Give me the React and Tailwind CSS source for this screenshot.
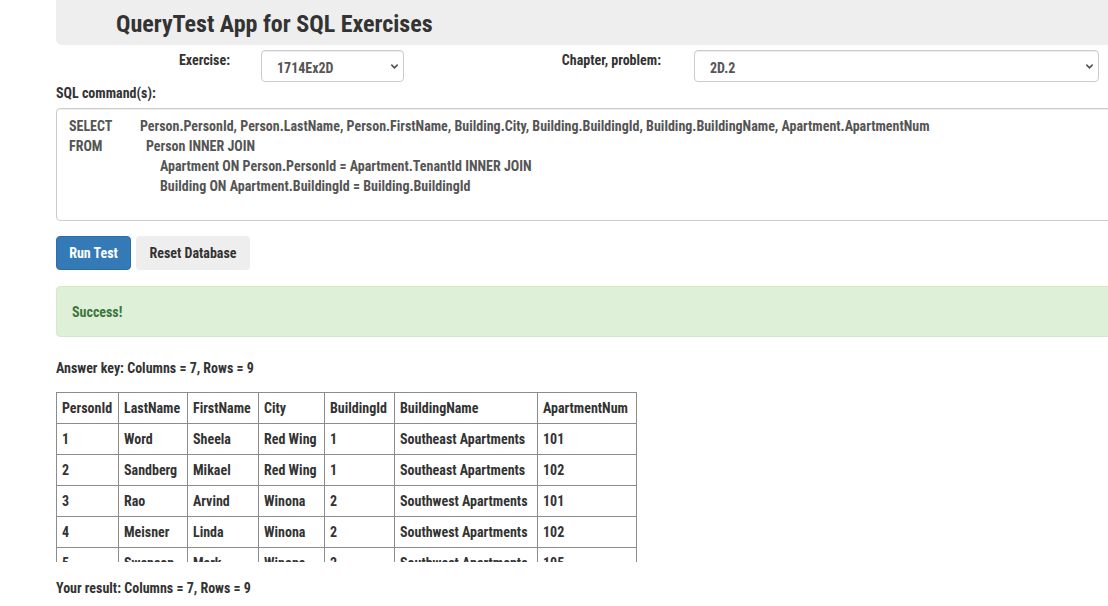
import React from "react";

function Chevron() {
  return (
    <svg width="9" height="9" viewBox="0 0 10 10" fill="none">
      <path d="M2 3.5 L5 6.5 L8 3.5" stroke="#555" strokeWidth="1.8" strokeLinecap="round" strokeLinejoin="round" />
    </svg>
  );
}

function Select({ value, w }) {
  return (
    <div className={`${w} h-[32px] border border-[#ccc] rounded-[4px] bg-white flex items-center justify-between pl-[15px] pr-[4px] text-[14px] font-bold text-[#555] shadow-[inset_0_1px_1px_rgba(0,0,0,0.075)]`}>
      <span className="mt-[3px]">{value}</span>
      <Chevron />
    </div>
  );
}

const cols = ["PersonId", "LastName", "FirstName", "City", "BuildingId", "BuildingName", "ApartmentNum"];
const widths = ["w-[62px]", "w-[69px]", "w-[71px]", "w-[66px]", "w-[70px]", "w-[143px]", "w-[99px]"];
const rows = [
  ["1", "Word", "Sheela", "Red Wing", "1", "Southeast Apartments", "101"],
  ["2", "Sandberg", "Mikael", "Red Wing", "1", "Southeast Apartments", "102"],
  ["3", "Rao", "Arvind", "Winona", "2", "Southwest Apartments", "101"],
  ["4", "Meisner", "Linda", "Winona", "2", "Southwest Apartments", "102"],
  ["5", "Swenson", "Mark", "Winona", "2", "Southwest Apartments", "105"],
  ["6", "Khan", "Aisha", "Winona", "2", "Southwest Apartments", "106"],
];

export default function App() {
  return (
    <div className="w-[1108px] h-[606px] overflow-hidden bg-white text-[#333] text-[14px] leading-[20px] font-bold font-['Roboto_Condensed',Roboto,sans-serif]">
      <div className="ml-[56px] w-[1100px]">
        <div className="h-[45px] bg-[#eeeeee] rounded-bl-[6px] pl-[60px] pt-[8px]">
          <h1 className="text-[24px] leading-[32px] font-bold text-[#333]">QueryTest App for SQL Exercises</h1>
        </div>

        <div className="flex items-start mt-[5px] h-[32px]">
          <div className="w-[175px] text-right pr-[1px]">Exercise:</div>
          <div className="ml-[30px]"><Select value="1714Ex2D" w="w-[143px]" /></div>
          <div className="w-[260px] text-right pr-[3px]">Chapter, problem:</div>
          <div className="ml-[30px]"><Select value="2D.2" w="w-[405px]" /></div>
        </div>

        <div className="mt-[1px]">SQL command(s):</div>

        <div className="mt-[5px] h-[113px] border border-[#ccc] rounded-[4px] pl-[12px] pt-[7px] text-[#555] shadow-[inset_0_1px_1px_rgba(0,0,0,0.075)]">
          <div className="flex whitespace-nowrap"><span className="w-[71px]">SELECT</span><span>Person.PersonId, Person.LastName, Person.FirstName, Building.City, Building.BuildingId, Building.BuildingName, Apartment.ApartmentNum</span></div>
          <div className="flex whitespace-nowrap"><span className="w-[77px]">FROM</span><span>Person INNER JOIN</span></div>
          <div className="pl-[91px] whitespace-nowrap">Apartment ON Person.PersonId = Apartment.TenantId INNER JOIN</div>
          <div className="pl-[91px] whitespace-nowrap">Building ON Apartment.BuildingId = Building.BuildingId</div>
        </div>

        <div className="flex gap-[5px] mt-[15px]">
          <div className="w-[75px] h-[34px] rounded-[4px] bg-[#337ab7] border border-[#2e6da4] text-white flex items-center justify-center">Run Test</div>
          <div className="w-[114px] h-[34px] rounded-[4px] bg-[#eeeeee] text-[#333] flex items-center justify-center">Reset Database</div>
        </div>

        <div className="mt-[16px] h-[51px] bg-[#dff0d8] border border-[#d6e9c6] rounded-[4px] pl-[15px] flex items-center text-[#3c763d]">
          Success!
        </div>

        <div className="mt-[21px]">Answer key: Columns = 7, Rows = 9</div>

        <div className="mt-[14px] h-[170px] overflow-hidden">
          <table className="border-collapse table-fixed w-[580px]">
            <thead>
              <tr>
                {cols.map((c, i) => (
                  <th key={c} className={`${widths[i]} h-[31px] border border-[#8c8c8c] text-left font-bold px-[5px] py-0 whitespace-nowrap`}>{c}</th>
                ))}
              </tr>
            </thead>
            <tbody>
              {rows.map((r, ri) => (
                <tr key={ri}>
                  {r.map((v, i) => (
                    <td key={i} className="h-[31px] border border-[#8c8c8c] px-[5px] py-0 whitespace-nowrap">{v}</td>
                  ))}
                </tr>
              ))}
            </tbody>
          </table>
        </div>

        <div className="mt-[16px]">Your result: Columns = 7, Rows = 9</div>
      </div>
    </div>
  );
}
